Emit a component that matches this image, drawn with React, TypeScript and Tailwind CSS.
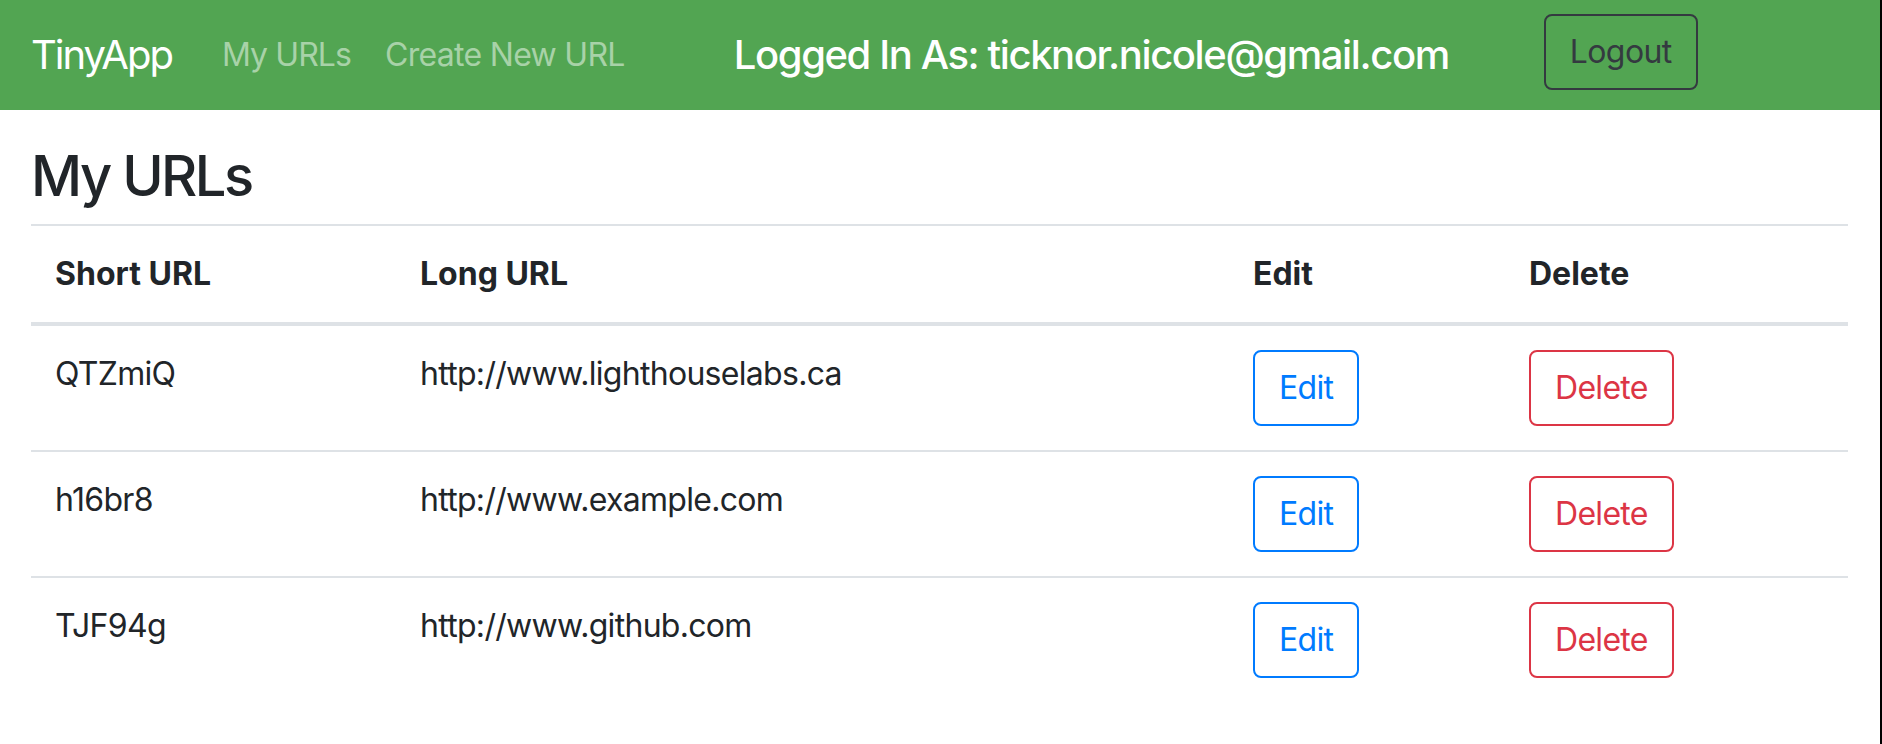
import React from "react";

const urls = [
  { short: "QTZmiQ", long: "http://www.lighthouselabs.ca" },
  { short: "h16br8", long: "http://www.example.com" },
  { short: "TJF94g", long: "http://www.github.com" },
];

const App = () => {
  return (
    <div className="flex min-h-screen bg-white font-['Inter','Liberation_Sans',sans-serif] text-[#212529]">
      <div className="flex-1">
        <nav className="flex h-[110px] items-center bg-[#52a552] px-[31px]">
          <a className="text-[40px] leading-[60px] tracking-[-2px] text-white">
            TinyApp
          </a>
          <a className="ml-[50px] text-[32px] leading-[48px] tracking-[-0.9px] text-[#a8d2a8]">
            My URLs
          </a>
          <a className="ml-[34px] text-[32px] leading-[48px] tracking-[-0.7px] text-[#a8d2a8]">
            Create New URL
          </a>
          <h5 className="ml-[109px] text-[40px] font-medium leading-[48px] tracking-[-1.4px] text-white">
            Logged In As: ticknor.nicole@gmail.com
          </h5>
          <button className="mb-[7px] ml-[95px] rounded-[8px] border-2 border-[#343a40] px-[24px] py-[12px] text-[32px] leading-[48px] tracking-[-0.6px] text-[#343a40]">
            Logout
          </button>
        </nav>

        <main className="pl-[31px] pr-[32px]">
          <h3 className="mb-[14px] pt-[33px] text-[56px] font-medium leading-[67px] tracking-[-2.5px]">
            My URLs
          </h3>
          <table className="w-full border-collapse text-left text-[32px] leading-[48px] tracking-[-0.7px]">
            <thead>
              <tr className="border-t-2 border-b-4 border-[#dee2e6]">
                <th className="w-[365px] p-[24px] font-bold tracking-normal">Short URL</th>
                <th className="w-[833px] p-[24px] font-bold tracking-normal">Long URL</th>
                <th className="w-[276px] p-[24px] font-bold tracking-normal">Edit</th>
                <th className="p-[24px] font-bold tracking-normal">Delete</th>
              </tr>
            </thead>
            <tbody>
              {urls.map((u, i) => (
                <tr
                  key={u.short}
                  className={i > 0 ? "border-t-2 border-[#dee2e6]" : ""}
                >
                  <td className="p-[24px] align-top">{u.short}</td>
                  <td className="p-[24px] align-top">{u.long}</td>
                  <td className="p-[24px] align-top">
                    <button className="rounded-[8px] border-2 border-[#007bff] px-[24px] py-[12px] leading-[48px] text-[#007bff]">
                      Edit
                    </button>
                  </td>
                  <td className="p-[24px] align-top">
                    <button className="rounded-[8px] border-2 border-[#dc3545] px-[24px] py-[12px] leading-[48px] text-[#dc3545]">
                      Delete
                    </button>
                  </td>
                </tr>
              ))}
            </tbody>
          </table>
        </main>
      </div>
      <div className="w-[2px] bg-black" />
    </div>
  );
};

export default App;
